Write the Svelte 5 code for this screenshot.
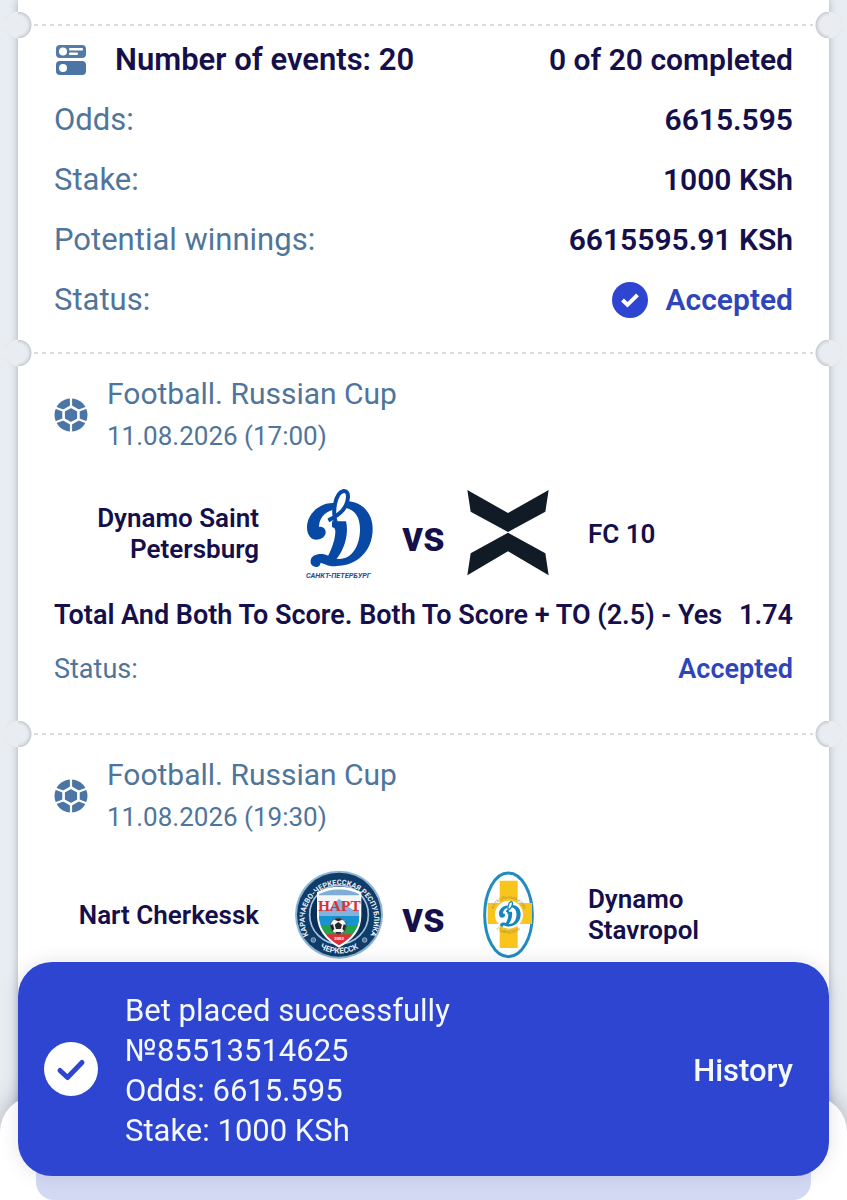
<script lang="ts">
    type Club = 'dynamo-spb' | 'fc10' | 'nart' | 'stavropol';

    interface Match {
        league: string;
        date: string;
        home: { name: string; club: Club };
        away: { name: string; club: Club };
        bet?: { market: string; odds: string; status: string };
    }

    const summary = [
        { label: 'Odds:', value: '6615.595' },
        { label: 'Stake:', value: '1000 KSh' },
        { label: 'Potential winnings:', value: '6615595.91 KSh' },
    ];

    const matches: Match[] = [
        {
            league: 'Football. Russian Cup',
            date: '11.08.2026 (17:00)',
            home: { name: 'Dynamo Saint Petersburg', club: 'dynamo-spb' },
            away: { name: 'FC 10', club: 'fc10' },
            bet: {
                market: 'Total And Both To Score. Both To Score + TO (2.5) - Yes',
                odds: '1.74',
                status: 'Accepted',
            },
        },
        {
            league: 'Football. Russian Cup',
            date: '11.08.2026 (19:30)',
            home: { name: 'Nart Cherkessk', club: 'nart' },
            away: { name: 'Dynamo Stavropol', club: 'stavropol' },
        },
    ];

    const receipt = [
        'Bet placed successfully',
        '№85513514625',
        'Odds: 6615.595',
        'Stake: 1000 KSh',
    ];
</script>

{#snippet football()}
    <svg class="football" viewBox="0 0 34 34" aria-hidden="true">
        <circle cx="17" cy="17" r="16.500" fill="#4a75a5" />
        <path d="M17 8.500l7.400 4.200v8.600L17 25.500l-7.400-4.200v-8.600z" fill="none" stroke="#fff" stroke-width="2.600" />
        <path d="M17 0v8.500M17 25.500V34M24.400 12.700l8.600-3.200M24.400 21.300l8.600 3.200M9.600 12.700L1 9.500M9.600 21.300L1 24.500" stroke="#fff" stroke-width="2.200" />
    </svg>
{/snippet}

{#snippet dynamoMark(color: string)}
    <!-- bowl, foot, stem, left hook, then the loop on top -->
    <g fill={color}>
        <path d="M142 52C188 54 218 88 218 135c0 65-46 111-110 111l-8-24c50 14 78-30 80-82 1-40-14-62-44-69z" />
        <path d="M33 225c7-17 37-18 51-10 16 7 31 13 46 12l-20 19c-25 3-35-7-48-10-2 12-10 15-17 12-13-2-15-14-12-23z" />
        <path d="M96 112l42 0c10 38-6 96-40 124l-14-20c14-26 22-54 22-74 0-12-6-10-10-14z" />
        <path d="M102 57C60 54 21 90 21 130c0 30 19 42 37 36 14-4 22-16 18-27-3-9-12-13-19-10 0-24 15-44 41-51z" />
    </g>
    <path d="M109 122C96 88 104 26 131 21c20-2 15 36-3 58-10 12-26 22-43 30" fill="none" stroke={color} stroke-width="12" />
{/snippet}

{#snippet crest(club: Club)}
    {#if club === 'dynamo-spb'}
        <svg class="crest" viewBox="-18 15 270 270" role="img" aria-label="Dynamo Saint Petersburg">
            {@render dynamoMark('#0749a4')}
            <text x="115" y="281" text-anchor="middle" font-size="22" font-weight="700" font-style="italic" fill="#1d4f94">САНКТ-ПЕТЕРБУРГ</text>
        </svg>
    {:else if club === 'fc10'}
        <svg class="crest" viewBox="521 27 270 270" role="img" aria-label="FC 10">
            <g fill="#101b26">
                <path d="M534 30l122 69 122-69-10 65-112 61-112-61z" />
                <path d="M534 286l122-72 122 72-10-66-112-62-112 62z" />
            </g>
        </svg>
    {:else if club === 'nart'}
        <svg class="crest" viewBox="27 22 270 270" role="img" aria-label="Nart Cherkessk">
            <defs>
                <path id="ring-top" d="M71 219A104 104 0 1 1 255 219" />
                <path id="ring-bottom" d="M82 240A118 118 0 0 0 244 240" />
                <clipPath id="shield">
                    <path d="M102 94q60-28 121 0v66q-1 54-61 88-58-34-60-88z" />
                </clipPath>
            </defs>
            <circle cx="162" cy="156" r="132" fill="#8eb4d3" />
            <circle cx="162" cy="156" r="126" fill="#103c69" />
            <circle cx="162" cy="156" r="88" fill="#0b3159" stroke="#a5c5df" stroke-width="5" />
            <path d="M96 88q66-32 133 0v73q-1 59-67 94-64-35-66-94z" fill="#fff" />
            <g clip-path="url(#shield)">
                <path fill="#7eaed8" d="M95 75h134v180H95z" />
                <path fill="#f3f5f7" d="M95 98h134v44H95z" />
                <path fill="#83b2dc" d="M95 157l26-14 14-5 27-30 26 23 20 13 21 13v24H95z" />
                <path fill="#1793d1" d="M95 160h134v29H95z" />
                <path fill="#24a449" d="M95 187h134v30H95z" />
                <path fill="#df3035" d="M95 215h134v40H95z" />
            </g>
            <text x="163" y="146" text-anchor="middle" font-family="'Liberation Serif', serif" font-size="46" font-weight="700" fill="#d92f35">НАРТ</text>
            <circle cx="160" cy="190" r="24" fill="#f6f6f6" stroke="#333" stroke-width="2" />
            <g fill="#26282b">
                <path d="M160 178l11 8-4 13h-14l-4-13z" />
                <path d="M148 171q12-8 24 0l-12 5zM137 187l7-2 4 14-6 7q-6-9-5-19zM183 187l-7-2-4 14 6 7q6-9 5-19zM151 208h18l-3 5h-12z" />
            </g>
            <text x="162" y="231" text-anchor="middle" font-size="13" font-weight="700" fill="#fff">2002</text>
            <g font-weight="700" fill="#e8f2fa">
                <text text-anchor="middle" font-size="22"><textPath href="#ring-top" startOffset="50%">КАРАЧАЕВО-ЧЕРКЕССКАЯ РЕСПУБЛИКА</textPath></text>
                <text text-anchor="middle" font-size="24"><textPath href="#ring-bottom" startOffset="50%">ЧЕРКЕССК</textPath></text>
            </g>
            <g fill="#54789a" stroke="#b8cedf" stroke-width="2">
                <circle cx="85" cy="232" r="7" />
                <circle cx="239" cy="232" r="7" />
            </g>
        </svg>
    {:else}
        <svg class="crest" viewBox="534 22 270 270" role="img" aria-label="Dynamo Stavropol">
            <defs>
                <path id="arc-top" d="M622 156A48 48 0 0 1 718 156" />
                <path id="arc-bottom" d="M613 156A57 57 0 0 0 727 156" />
            </defs>
            <path d="M670 31c41 0 72 58 72 126s-31 125-72 125-71-57-71-125 30-126 71-126z" fill="#fff" stroke="#238cbe" stroke-width="9" />
            <path d="M644 54h54v67h43v63h-43v72h-54v-72h-36v-63h36z" fill="#f9c51c" />
            <circle cx="672" cy="156" r="42" fill="#fff" />
            <g transform="translate(635 110) scale(.33)">{@render dynamoMark('#1686bd')}</g>
            <g font-size="12" fill="#a58d4b">
                <text text-anchor="middle"><textPath href="#arc-top" startOffset="50%">ФУТБОЛЬНЫЙ КЛУБ</textPath></text>
                <text text-anchor="middle"><textPath href="#arc-bottom" startOffset="50%">СТАВРОПОЛЬ</textPath></text>
            </g>
        </svg>
    {/if}
{/snippet}

<div class="page">
    <main class="ticket">
        <section class="stub summary">
            <div class="row">
                <h1>
                    <svg class="events" viewBox="0 0 30 30" aria-hidden="true">
                        <rect width="30" height="13" rx="4" fill="#527ba5" />
                        <rect y="16" width="30" height="14" rx="4" fill="#4a75a5" />
                        <g fill="#fff">
                            <circle cx="7" cy="6.500" r="4" />
                            <circle cx="7" cy="23" r="4" />
                            <rect x="13" y="3" width="14" height="2.400" rx="1" />
                            <rect x="13" y="7.600" width="9" height="2.400" rx="1" />
                        </g>
                    </svg>
                    Number of events: 20
                </h1>
                <strong>0 of 20 completed</strong>
            </div>
            {#each summary as item}
                <div class="row">
                    <span class="label">{item.label}</span>
                    <strong>{item.value}</strong>
                </div>
            {/each}
            <div class="row">
                <span class="label">Status:</span>
                <strong class="accepted">
                    <svg class="tick" viewBox="0 0 36 36" aria-hidden="true">
                        <circle cx="18" cy="18" r="18" fill="#2e45d1" />
                        <path d="M10.500 18l5 4.800 10-10" fill="none" stroke="#fff" stroke-width="4" />
                    </svg>
                    Accepted
                </strong>
            </div>
        </section>

        {#each matches as match}
            <section class="stub match">
                <header>
                    {@render football()}
                    <div>
                        <h2>{match.league}</h2>
                        <time>{match.date}</time>
                    </div>
                </header>
                <div class="teams">
                    <span class="team home">{match.home.name}</span>
                    {@render crest(match.home.club)}
                    <span class="versus">vs</span>
                    {@render crest(match.away.club)}
                    <span class="team">{match.away.name}</span>
                </div>
                {#if match.bet}
                    <div class="row bet">
                        <strong>{match.bet.market}</strong>
                        <strong>{match.bet.odds}</strong>
                    </div>
                    <div class="row bet">
                        <span class="label">Status:</span>
                        <strong class="accepted">{match.bet.status}</strong>
                    </div>
                {/if}
            </section>
        {/each}
    </main>

    <div class="sheet">
        <div class="sheet-button"></div>
    </div>

    <div class="toast" role="status">
        <svg class="toast-tick" viewBox="0 0 54 54" aria-hidden="true">
            <circle cx="27" cy="27" r="27" fill="#fff" />
            <path d="M16 28.500l7.500 7L38 20.500" fill="none" stroke="#2e45d1" stroke-width="5" stroke-linecap="round" stroke-linejoin="round" />
        </svg>
        <div class="receipt">
            {#each receipt as line}
                <p>{line}</p>
            {/each}
        </div>
        <button type="button">History</button>
    </div>
</div>

<style>
    :global(body) {
        margin: 0;
        background: #e9edf2;
    }

    .page {
        display: flex;
        flex-direction: column;
        min-height: 100vh;
        font-family: Roboto, sans-serif;
        font-size: 31px;
        line-height: 36px;
        color: #150f4b;
    }

    .ticket {
        flex: 1;
        margin: 0 18px;
        padding-top: 24px;
        background: #fff;
        box-shadow: 0 0 8px rgba(70, 80, 105, 0.4);
    }

    .stub {
        position: relative;
        padding: 0 36px;
    }

    /* perforated line between the ticket stubs */
    .stub::before {
        content: '';
        display: block;
        height: 2px;
        margin: 0 -20px;
        background: repeating-linear-gradient(90deg, #d9dde3 0 4px, transparent 4px 8px);
    }

    /* both round notches, one on each edge; the outer halves carry no rim */
    .stub::after {
        content: '';
        position: absolute;
        top: -12px;
        left: -13px;
        right: -13px;
        height: 26px;
        background:
            radial-gradient(circle at 13px 13px, #e9edf2 13px, transparent 14px) left / 13px 26px no-repeat,
            radial-gradient(circle at 0 13px, #e9edf2 13px, transparent 14px) right / 13px 26px no-repeat,
            radial-gradient(circle at 13px 13px, #e9edf2 9px, #dde1e6 11px, #c9cdd3 13px, transparent 14px) left / 28px 26px no-repeat,
            radial-gradient(circle at 15px 13px, #e9edf2 9px, #dde1e6 11px, #c9cdd3 13px, transparent 14px) right / 28px 26px no-repeat;
    }

    .row {
        display: flex;
        justify-content: space-between;
    }

    .summary .row {
        margin-bottom: 24px;
    }

    .summary .row:first-child {
        margin-top: 16px;
    }

    .summary .row:last-child {
        margin-bottom: 34px;
    }

    h1,
    h2,
    p {
        margin: 0;
        font-size: inherit;
        font-weight: 400;
    }

    strong,
    h1 {
        font-weight: 600;
    }

    .summary strong {
        font-size: 30px;
    }

    h1,
    .accepted {
        display: flex;
        align-items: center;
    }

    .events {
        width: 30px;
        height: 30px;
        margin: 0 29px 0 2px;
    }

    .label,
    header {
        color: #50759b;
    }

    .accepted {
        color: #2f45ba;
    }

    .tick {
        width: 36px;
        height: 36px;
        margin-right: 18px;
    }

    .match {
        padding-bottom: 46px;
    }

    header {
        display: flex;
        align-items: center;
        gap: 19px;
        margin-top: 22px;
    }

    h2 {
        font-size: 30px;
    }

    .football {
        width: 34px;
        height: 34px;
    }

    time {
        display: block;
        margin-top: 6px;
        font-size: 26px;
    }

    .teams {
        display: grid;
        grid-template-columns: 1fr auto auto auto 1fr;
        align-items: center;
        margin-top: 35px;
    }

    .team {
        padding-left: 35px;
        font-size: 26px;
        font-weight: 600;
        line-height: 31px;
    }

    .home {
        padding: 0 35px 0 0;
        text-align: right;
    }

    .crest {
        width: 90px;
        height: 90px;
        overflow: visible;
    }

    .versus {
        padding: 6px 18px 0;
        font-size: 42px;
        font-weight: 700;
    }

    .bet {
        margin-top: 18px;
        font-size: 27px;
    }

    .sheet {
        position: fixed;
        bottom: 0;
        left: 0;
        right: 0;
        height: 104px;
        padding: 0 36px;
        border-radius: 36px 36px 0 0;
        background: #fff;
        box-shadow: 0 0 24px rgba(60, 65, 75, 0.35);
    }

    .sheet-button {
        height: 104px;
        border-radius: 0 0 18px 18px;
        background: #d3d9f2;
    }

    .toast {
        position: fixed;
        bottom: 24px;
        left: 18px;
        right: 18px;
        display: flex;
        align-items: center;
        gap: 27px;
        padding: 25px 36px 25px 26px;
        border-radius: 34px;
        background: #2e45d1;
        color: #f4f8ff;
        line-height: 40px;
        box-shadow: 0 0 18px rgba(60, 70, 110, 0.15);
    }

    .toast-tick {
        width: 54px;
        height: 54px;
    }

    .receipt {
        flex: 1;
        padding-top: 4px;
    }

    button {
        padding: 4px 0 0;
        border: 0;
        background: none;
        color: inherit;
        font: inherit;
        font-weight: 500;
        cursor: pointer;
    }
</style>
